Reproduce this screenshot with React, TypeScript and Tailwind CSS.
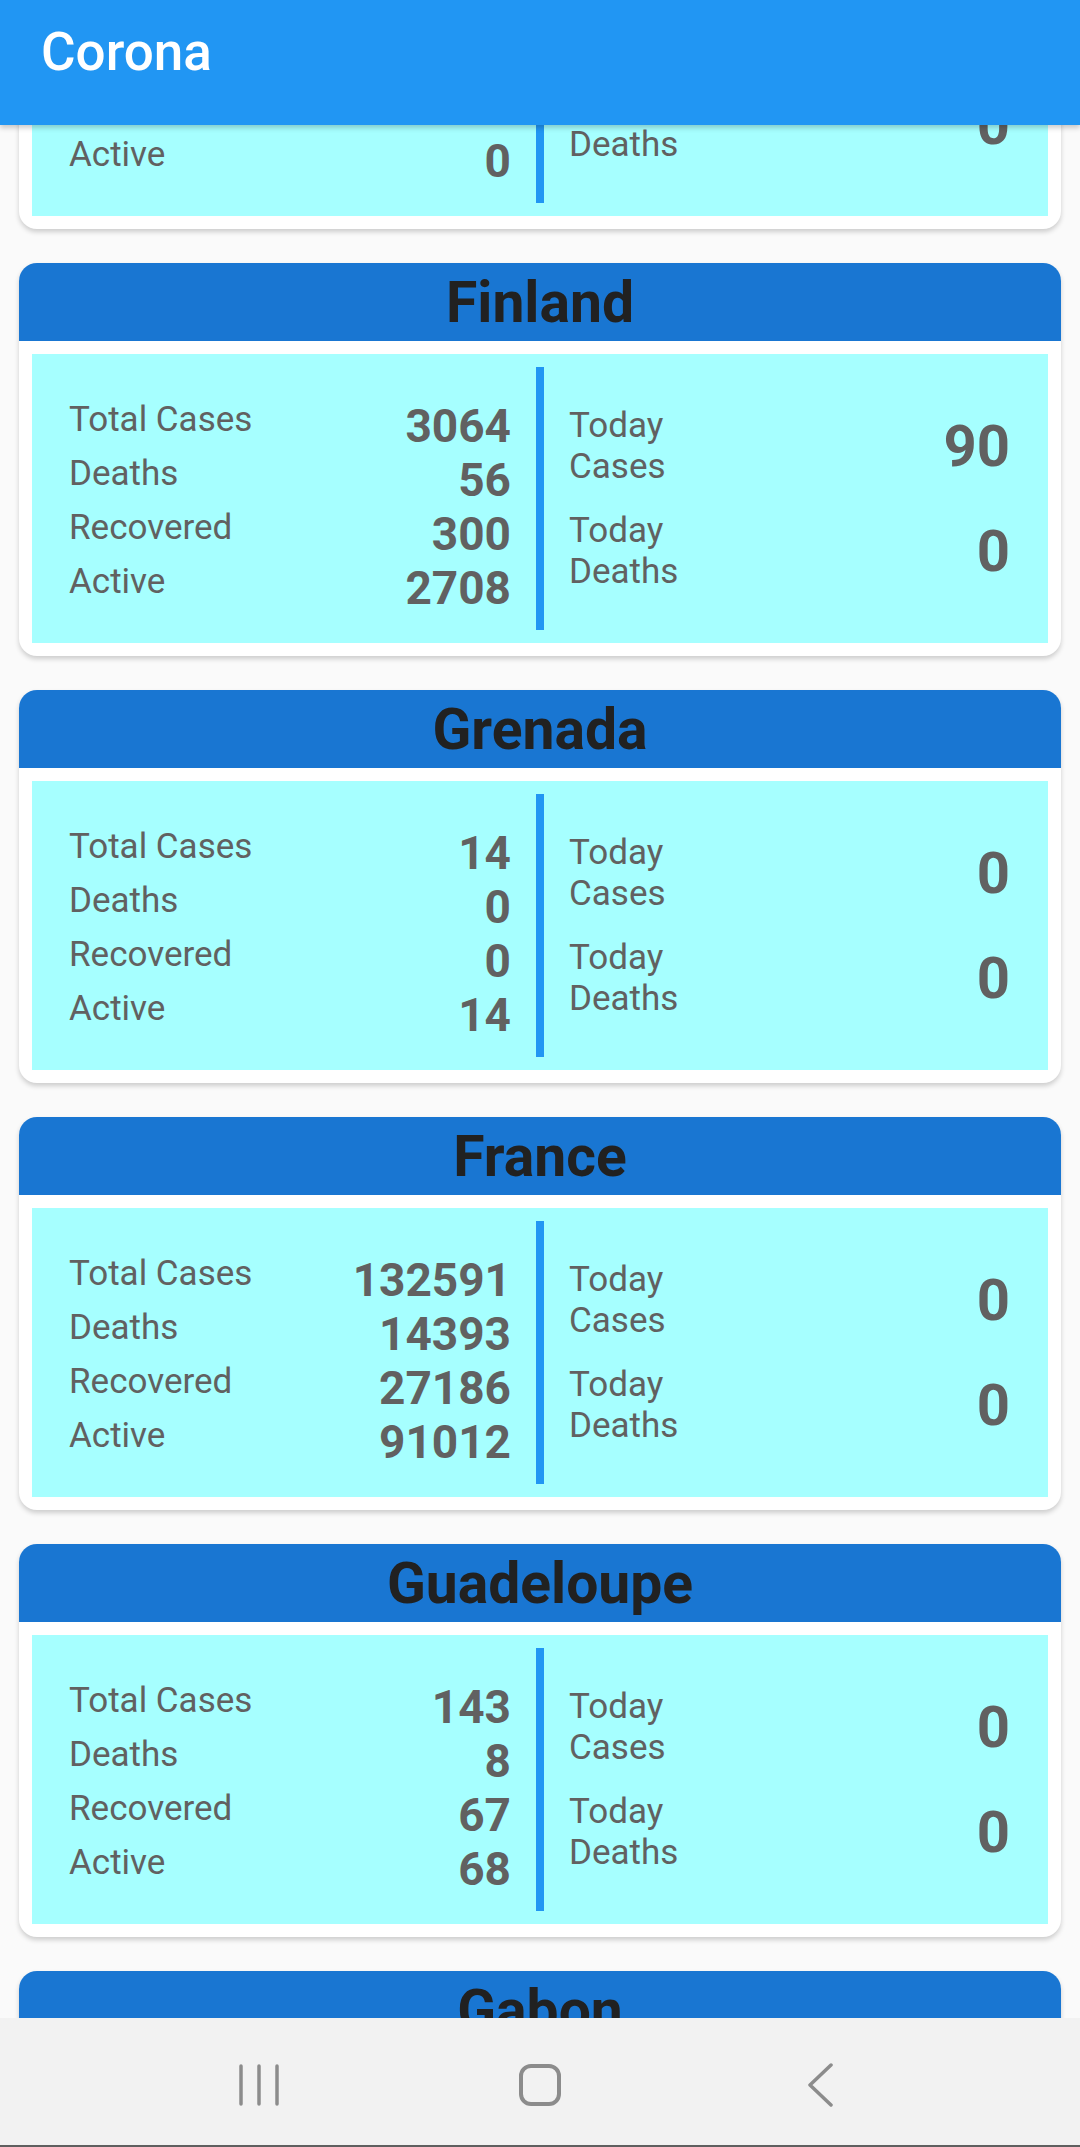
type Country = {
  name: string
  total: number
  deaths: number
  recovered: number
  active: number
  todayCases: number
  todayDeaths: number
}

const countries: Country[] = [
  { name: "Falkland Islands", total: 11, deaths: 0, recovered: 11, active: 0, todayCases: 0, todayDeaths: 0 },
  { name: "Finland", total: 3064, deaths: 56, recovered: 300, active: 2708, todayCases: 90, todayDeaths: 0 },
  { name: "Grenada", total: 14, deaths: 0, recovered: 0, active: 14, todayCases: 0, todayDeaths: 0 },
  { name: "France", total: 132591, deaths: 14393, recovered: 27186, active: 91012, todayCases: 0, todayDeaths: 0 },
  { name: "Guadeloupe", total: 143, deaths: 8, recovered: 67, active: 68, todayCases: 0, todayDeaths: 0 },
  { name: "Gabon", total: 57, deaths: 1, recovered: 4, active: 52, todayCases: 0, todayDeaths: 0 },
]

function StatRow({ label, value }: { label: string; value: number }) {
  return (
    <div className="flex items-start justify-between h-[54px]">
      <span className="text-[35px] leading-[42px] text-[#616161]">{label}</span>
      <span className="text-[46px] leading-[54px] font-bold text-[#616161]">{value}</span>
    </div>
  )
}

function TodayRow({ top, bottom, value }: { top: string; bottom: string; value: number }) {
  return (
    <div className="flex items-center justify-between">
      <div className="flex flex-col text-[35px] leading-[41px] text-[#616161]">
        <span>{top}</span>
        <span>{bottom}</span>
      </div>
      <span className="text-[58px] leading-[68px] font-bold text-[#616161]">{value}</span>
    </div>
  )
}

function CountryCard({ c }: { c: Country }) {
  return (
    <div className="mx-[19px] rounded-[18px] bg-white overflow-hidden shadow-[0_3px_5px_rgba(0,0,0,0.18)]">
      <div className="h-[78px] bg-[#1976d2] flex items-center justify-center">
        <span className="text-[57px] leading-[67px] font-bold text-[#212121]">{c.name}</span>
      </div>
      <div className="p-[13px]">
        <div className="h-[289px] bg-[#a6ffff] flex">
          <div className="w-[442px] ml-[37px] self-center pt-[16px]">
            <StatRow label="Total Cases" value={c.total} />
            <StatRow label="Deaths" value={c.deaths} />
            <StatRow label="Recovered" value={c.recovered} />
            <StatRow label="Active" value={c.active} />
          </div>
          <div className="w-[8px] ml-[25px] my-[13px] bg-[#2196f3]" />
          <div className="w-[441px] ml-[25px] self-center flex flex-col gap-[23px]">
            <TodayRow top="Today" bottom="Cases" value={c.todayCases} />
            <TodayRow top="Today" bottom="Deaths" value={c.todayDeaths} />
          </div>
        </div>
      </div>
    </div>
  )
}

function NavBar() {
  return (
    <div className="h-[129px] bg-[#f2f2f2] border-b-2 border-[#5f5f5f] pt-[45px]">
      <div className="w-[843px] mx-auto grid grid-cols-3 items-start">
        <div className="flex justify-center">
          <svg width="44" height="44" viewBox="0 0 44 44">
            <g stroke="#8c8c8c" strokeWidth="3.5" strokeLinecap="round">
              <line x1="4" y1="3" x2="4" y2="41" />
              <line x1="22" y1="3" x2="22" y2="41" />
              <line x1="40" y1="3" x2="40" y2="41" />
            </g>
          </svg>
        </div>
        <div className="flex justify-center">
          <svg width="46" height="46" viewBox="0 0 46 46">
            <rect x="4" y="3" width="38" height="38" rx="10" fill="none" stroke="#8c8c8c" strokeWidth="4" />
          </svg>
        </div>
        <div className="flex justify-center">
          <svg width="30" height="46" viewBox="0 0 30 46">
            <polyline points="25,2 4,22 25,42" fill="none" stroke="#8c8c8c" strokeWidth="3.5" strokeLinecap="round" strokeLinejoin="round" />
          </svg>
        </div>
      </div>
    </div>
  )
}

export default function App() {
  return (
    <div className="h-[2147px] w-[1080px] flex flex-col bg-[#fafafa] font-['Roboto',sans-serif]">
      <div className="h-[125px] shrink-0 bg-[#2196f3] relative z-10 shadow-[0_3px_5px_rgba(0,0,0,0.2)] pl-[41px] pt-[21px]">
        <span className="text-[53px] leading-[62px] font-medium text-white">Corona</span>
      </div>
      <div className="flex-1 overflow-hidden">
        <div className="mt-[-289px] flex flex-col gap-[34px]">
          {countries.map((c) => (
            <CountryCard key={c.name} c={c} />
          ))}
        </div>
      </div>
      <NavBar />
    </div>
  )
}
